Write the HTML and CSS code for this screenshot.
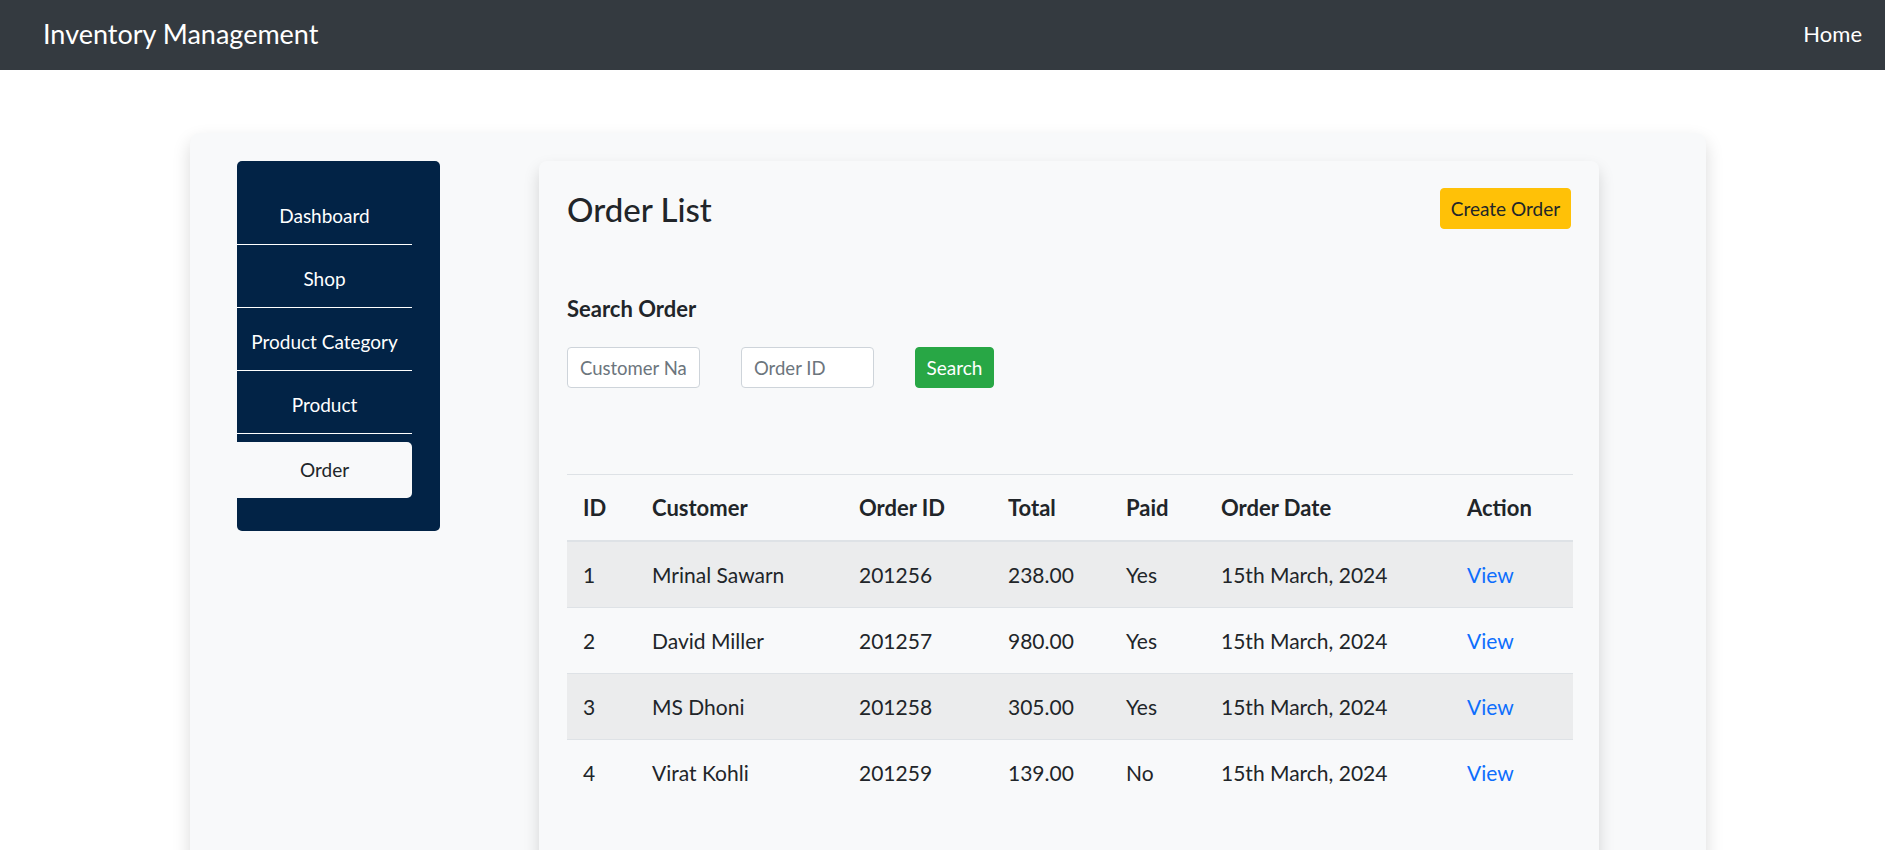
FILE: index.html
```html
<!DOCTYPE html>
<html lang="en">
<head>
<meta charset="utf-8">
<title>Inventory Management</title>
<link rel="stylesheet" href="styles.css">
</head>
<body>
<nav class="topbar">
  <a class="brand" href="#">Inventory Management</a>
  <a class="home-link" href="#">Home</a>
</nav>

<div class="page">
  <div class="shell">
    <aside class="sidebar">
      <a class="side-item" href="#">Dashboard</a>
      <a class="side-item" href="#">Shop</a>
      <a class="side-item" href="#">Product Category</a>
      <a class="side-item" href="#">Product</a>
      <a class="side-item active" href="#">Order</a>
    </aside>

    <main class="panel">
      <div class="panel-head">
        <h2 class="panel-title">Order List</h2>
        <button class="btn btn-warning">Create Order</button>
      </div>

      <h5 class="search-title">Search Order</h5>
      <form class="search-form">
        <input class="field" type="text" placeholder="Customer Name">
        <input class="field" type="text" placeholder="Order ID">
        <button class="btn btn-success" type="button">Search</button>
      </form>

      <table class="orders">
        <colgroup>
          <col class="c-id"><col class="c-cust"><col class="c-oid"><col class="c-total"><col class="c-paid"><col class="c-date"><col class="c-act">
        </colgroup>
        <thead>
          <tr><th>ID</th><th>Customer</th><th>Order ID</th><th>Total</th><th>Paid</th><th>Order Date</th><th>Action</th></tr>
        </thead>
        <tbody>
          <tr><td>1</td><td>Mrinal Sawarn</td><td>201256</td><td>238.00</td><td>Yes</td><td>15th March, 2024</td><td><a href="#">View</a></td></tr>
          <tr><td>2</td><td>David Miller</td><td>201257</td><td>980.00</td><td>Yes</td><td>15th March, 2024</td><td><a href="#">View</a></td></tr>
          <tr><td>3</td><td>MS Dhoni</td><td>201258</td><td>305.00</td><td>Yes</td><td>15th March, 2024</td><td><a href="#">View</a></td></tr>
          <tr><td>4</td><td>Virat Kohli</td><td>201259</td><td>139.00</td><td>No</td><td>15th March, 2024</td><td><a href="#">View</a></td></tr>
        </tbody>
      </table>
    </main>
  </div>
</div>
</body>
</html>
```

FILE: styles.css
```css
* { box-sizing: border-box; }

html, body {
  margin: 0;
  padding: 0;
}

body {
  font-family: Lato, "Noto Sans", sans-serif;
  color: #212529;
  background: #ffffff;
  overflow: hidden;
}

a { text-decoration: none; }

/* top navigation */
.topbar {
  height: 70px;
  background: #343a40;
  display: flex;
  align-items: center;
  justify-content: space-between;
  padding: 0 23px 0 43px;
}

.brand {
  color: #ffffff;
  font-size: 27px;
  line-height: 32px;
  margin-top: -2px;
}

.home-link {
  color: #ffffff;
  font-size: 22px;
  line-height: 26px;
  margin-top: -2px;
}

/* page shell */
.page {
  padding: 63px 179px 0 190px;
}

.shell {
  display: flex;
  align-items: flex-start;
  gap: 99px;
  background: #f8f9fa;
  border-radius: 10px;
  box-shadow: 0 8px 18px rgba(0, 0, 0, 0.15);
  padding: 28px 107px 0 47px;
  min-height: 900px;
}

/* sidebar */
.sidebar {
  flex: 0 0 203px;
  width: 203px;
  background: #022346;
  border-radius: 5px;
  padding: 21px 0 33px;
  display: flex;
  flex-direction: column;
}

.side-item {
  display: block;
  width: 175px;
  color: #ffffff;
  text-align: center;
  font-size: 19px;
  line-height: 24px;
  padding: 22px 0 16px;
  border-bottom: 1px solid #ffffff;
}

.side-item.active {
  margin-top: 8px;
  background: #f8f9fa;
  color: #212529;
  border-bottom: 0;
  border-radius: 0 5px 5px 0;
  padding: 16px 0;
}

/* main panel */
.panel {
  flex: 0 0 1060px;
  width: 1060px;
  background: #f8f9fa;
  border-radius: 8px;
  box-shadow: 0 8px 16px rgba(0, 0, 0, 0.15);
  padding: 27px 28px 60px;
  min-height: 760px;
}

.panel-head {
  display: flex;
  align-items: center;
  justify-content: space-between;
  height: 41px;
}

.panel-title {
  margin: 0;
  font-size: 33px;
  font-weight: 500;
  line-height: 40px;
}

.btn {
  font-family: inherit;
  border: 1px solid transparent;
  border-radius: 4px;
  height: 41px;
  font-size: 19px;
  line-height: 24px;
  padding: 0 8px;
  cursor: pointer;
}

.btn-warning {
  background: #ffc107;
  border-color: #ffc107;
  color: #212529;
  width: 131px;
}

.btn-success {
  background: #28a745;
  border-color: #28a745;
  color: #ffffff;
  width: 79px;
}

.search-title {
  margin: 67px 0 25px;
  font-size: 22px;
  font-weight: 700;
  line-height: 26px;
}

.search-form {
  display: flex;
  gap: 41px;
  margin: 0;
}

.field {
  width: 133px;
  height: 41px;
  border: 1px solid #ced4da;
  border-radius: 4px;
  background: #ffffff;
  padding: 0 12px;
  font-family: inherit;
  font-size: 18.5px;
  color: #495057;
}

.field::placeholder { color: #6c757d; }

/* table */
.orders {
  margin-top: 86px;
  width: 1006px;
  border-collapse: collapse;
  table-layout: fixed;
  font-size: 21px;
}

.c-id { width: 69px; }
.c-cust { width: 207px; }
.c-oid { width: 149px; }
.c-total { width: 118px; }
.c-paid { width: 95px; }
.c-date { width: 246px; }
.c-act { width: 122px; }

.orders th,
.orders td {
  text-align: left;
  padding: 17px 16px;
  line-height: 31px;
  border-top: 1px solid #dee2e6;
  white-space: nowrap;
}

.orders th {
  font-size: 22px;
  font-weight: 700;
  border-bottom: 2px solid #dee2e6;
}

.orders tbody tr:nth-child(odd) td {
  background: rgba(0, 0, 0, 0.05);
}

.orders a { color: #0d6efd; }
```
